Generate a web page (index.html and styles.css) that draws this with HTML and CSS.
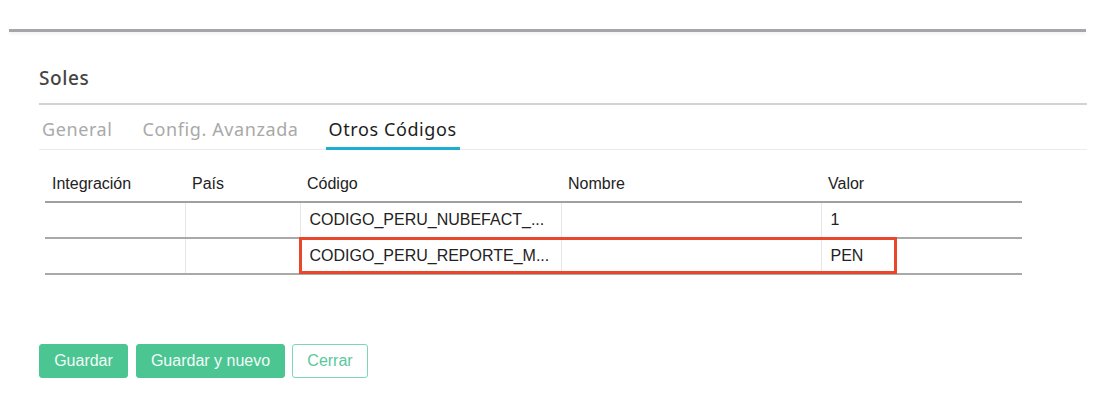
FILE: index.html
```html
<!DOCTYPE html>
<html lang="es">
<head>
  <meta charset="UTF-8">
  <title>Soles</title>
  <link rel="stylesheet" href="styles.css">
</head>
<body>
<div class="topbar"></div>

<div class="panel">
  <h2 class="title">Soles</h2>

  <ul class="tabs">
    <li class="tab">General</li>
    <li class="tab">Config. Avanzada</li>
    <li class="tab active">Otros Códigos</li>
  </ul>

  <div class="grid-wrap">
    <table class="grid">
      <thead>
      <tr>
        <th class="c-int">Integración</th>
        <th class="c-pais">País</th>
        <th class="c-cod">Código</th>
        <th class="c-nom">Nombre</th>
        <th class="c-val">Valor</th>
      </tr>
      </thead>
      <tbody>
      <tr>
        <td></td>
        <td></td>
        <td>CODIGO_PERU_NUBEFACT_...</td>
        <td></td>
        <td>1</td>
      </tr>
      <tr class="marked">
        <td></td>
        <td></td>
        <td>CODIGO_PERU_REPORTE_M...</td>
        <td></td>
        <td>PEN</td>
      </tr>
      </tbody>
    </table>
    <div class="mark"></div>
  </div>

  <div class="actions">
    <button class="btn btn-primary btn-save">Guardar</button>
    <button class="btn btn-primary btn-save-new">Guardar y nuevo</button>
    <button class="btn btn-outline btn-close">Cerrar</button>
  </div>
</div>
</body>
</html>
```

FILE: styles.css
```css
body {
  margin: 0;
  background-color: #fff;
  font-family: "Liberation Sans", Arial, sans-serif;
  color: #222;
}
.topbar {
  margin: 29px 12px 0 9px;
  height: 3px;
  background-color: #a5a6aa;
  box-shadow: 0 2px 3px rgba(0, 0, 0, 0.06);
}
.panel {
  margin-left: 39px;
  width: 1048px;
}
.title {
  margin: 0;
  padding-top: 33px;
  height: 38px;
  font-family: "Noto Sans", sans-serif;
  font-size: 19px;
  font-weight: 500;
  letter-spacing: 0.6px;
  color: #444;
  border-bottom: 2px solid #d3d3d3;
}
.tabs {
  list-style: none;
  margin: 0;
  padding: 0;
  display: flex;
  gap: 24px;
  border-bottom: 1px solid #ececec;
  height: 44px;
}
.tab {
  padding: 12px 3px 0;
  font-family: "Noto Sans", sans-serif;
  font-size: 18px;
  letter-spacing: 0.6px;
  color: #a9a9a9;
  box-sizing: border-box;
}
.tab.active {
  color: #1d1d1d;
  border-bottom: 3px solid #1eaed2;
  margin-bottom: -1px;
}
.grid-wrap {
  position: relative;
  margin: 17px 0 0 6px;
  width: 977px;
}
.grid {
  width: 100%;
  border-collapse: collapse;
  font-size: 16px;
}
.grid th {
  text-align: left;
  font-weight: normal;
  padding: 7px 7px 8px;
  height: 19px;
  border-bottom: 2px solid #a0a0a0;
}
.grid td {
  height: 36px;
  padding: 0 9px;
  box-sizing: border-box;
  border-bottom: 2px solid #a9a9a9;
  border-left: 1px solid #e6e6e6;
}
.grid td:first-child {
  border-left: none;
}
.c-int { width: 126px; }
.c-pais { width: 101px; }
.c-cod { width: 247px; }
.c-nom { width: 246px; }
.mark {
  position: absolute;
  left: 254px;
  top: 70px;
  width: 592px;
  height: 31px;
  border: 3px solid #e8472b;
}
.actions {
  display: flex;
  gap: 7px;
  margin-top: 69px;
}
.btn {
  height: 34px;
  padding: 0;
  border-radius: 3px;
  font-family: "Liberation Sans", Arial, sans-serif;
  font-size: 16px;
  text-align: center;
  cursor: pointer;
}
.btn-save { width: 89px; }
.btn-save-new { width: 149px; margin-left: 1px; }
.btn-close { width: 76px; }
.btn-primary {
  background-color: #4bc592;
  border: 1px solid #4bc592;
  color: #f2fbf7;
}
.btn-outline {
  background-color: #fff;
  border: 1px solid #7fd6b2;
  color: #5ac89b;
}
```
